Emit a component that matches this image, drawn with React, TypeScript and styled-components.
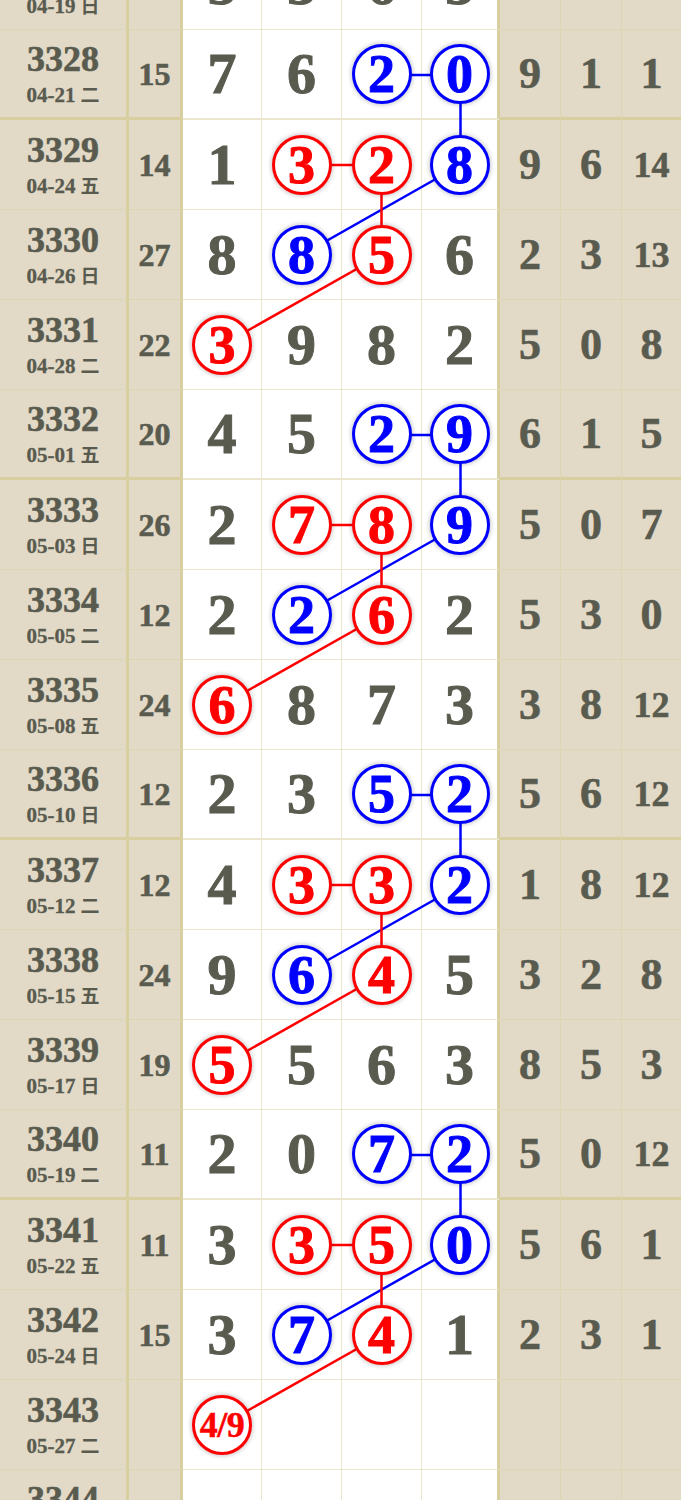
import React from "react";
import styled, { createGlobalStyle, css } from "styled-components";

const GlobalStyle = createGlobalStyle`
  html, body {
    margin: 0;
    padding: 0;
    background: #e2d9c7;
    overflow: hidden;
  }
  body {
    font-family: "Liberation Serif", "Noto Sans CJK SC", serif;
  }
`;

const ROW_H = 90;
const COLS = [129, 54, 79, 80, 80, 78, 61, 61, 59];
const INK = "#595b4f";
const BLUE = "#0000ff";
const RED = "#ff0000";
const RULE = "#d7cf9f";
const RULE_LIGHT = "#ddd6b2";
const RULE_WHITE = "#ebe6cd";

type Tone = "r" | "b" | "n";

interface DrawRow {
  no: number;
  date: string;
  wd: string;
  sum?: number;
  main: string[];
  tail: (number | "")[];
}

const rows: DrawRow[] = [
  { no: 3327, date: "04-19", wd: "日", sum: 17, main: ["5", "3", "6", "3"], tail: [4, 2, 9] },
  { no: 3328, date: "04-21", wd: "二", sum: 15, main: ["7", "6", "b2", "b0"], tail: [9, 1, 1] },
  { no: 3329, date: "04-24", wd: "五", sum: 14, main: ["1", "r3", "r2", "b8"], tail: [9, 6, 14] },
  { no: 3330, date: "04-26", wd: "日", sum: 27, main: ["8", "b8", "r5", "6"], tail: [2, 3, 13] },
  { no: 3331, date: "04-28", wd: "二", sum: 22, main: ["r3", "9", "8", "2"], tail: [5, 0, 8] },
  { no: 3332, date: "05-01", wd: "五", sum: 20, main: ["4", "5", "b2", "b9"], tail: [6, 1, 5] },
  { no: 3333, date: "05-03", wd: "日", sum: 26, main: ["2", "r7", "r8", "b9"], tail: [5, 0, 7] },
  { no: 3334, date: "05-05", wd: "二", sum: 12, main: ["2", "b2", "r6", "2"], tail: [5, 3, 0] },
  { no: 3335, date: "05-08", wd: "五", sum: 24, main: ["r6", "8", "7", "3"], tail: [3, 8, 12] },
  { no: 3336, date: "05-10", wd: "日", sum: 12, main: ["2", "3", "b5", "b2"], tail: [5, 6, 12] },
  { no: 3337, date: "05-12", wd: "二", sum: 12, main: ["4", "r3", "r3", "b2"], tail: [1, 8, 12] },
  { no: 3338, date: "05-15", wd: "五", sum: 24, main: ["9", "b6", "r4", "5"], tail: [3, 2, 8] },
  { no: 3339, date: "05-17", wd: "日", sum: 19, main: ["r5", "5", "6", "3"], tail: [8, 5, 3] },
  { no: 3340, date: "05-19", wd: "二", sum: 11, main: ["2", "0", "b7", "b2"], tail: [5, 0, 12] },
  { no: 3341, date: "05-22", wd: "五", sum: 11, main: ["3", "r3", "r5", "b0"], tail: [5, 6, 1] },
  { no: 3342, date: "05-24", wd: "日", sum: 15, main: ["3", "b7", "r4", "1"], tail: [2, 3, 1] },
  { no: 3343, date: "05-27", wd: "二", main: ["r4/9", "", "", ""], tail: ["", "", ""] },
  { no: 3344, date: "05-29", wd: "五", main: ["", "", "", ""], tail: ["", "", ""] },
];

/* x centre of each of the four main columns */
const colCenter = (i: number) => {
  const start = COLS[0] + COLS[1] + COLS.slice(2, 2 + i).reduce((a, b) => a + b, 0);
  return start + (COLS[2 + i] - 1) / 2;
};
const rowCenter = (i: number) => ROW_H * i + ROW_H / 2;

interface Seg {
  x1: number;
  y1: number;
  x2: number;
  y2: number;
  tone: "r" | "b";
}

const groups = [1, 5, 9, 13];
const segments: Seg[] = groups.flatMap((a) => [
  { x1: colCenter(2), y1: rowCenter(a), x2: colCenter(3), y2: rowCenter(a), tone: "b" as const },
  { x1: colCenter(3), y1: rowCenter(a), x2: colCenter(3), y2: rowCenter(a + 1), tone: "b" as const },
  { x1: colCenter(1), y1: rowCenter(a + 1), x2: colCenter(2), y2: rowCenter(a + 1), tone: "r" as const },
  { x1: colCenter(3), y1: rowCenter(a + 1), x2: colCenter(1), y2: rowCenter(a + 2), tone: "b" as const },
  { x1: colCenter(2), y1: rowCenter(a + 1), x2: colCenter(2), y2: rowCenter(a + 2), tone: "r" as const },
  { x1: colCenter(2), y1: rowCenter(a + 2), x2: colCenter(0), y2: rowCenter(a + 3), tone: "r" as const },
]);

const Page = styled.div`
  width: 681px;
  margin-top: -60px;
`;

const Table = styled.div`
  position: relative;
  width: 681px;
`;

const Row = styled.div`
  display: grid;
  grid-template-columns: ${COLS.map((c) => `${c}px`).join(" ")};
  height: ${ROW_H}px;
`;

const bottomRule = (thick: boolean, white: boolean) =>
  white
    ? css`border-bottom: ${thick ? 2 : 1}px solid ${RULE_WHITE};`
    : css`border-bottom: ${thick ? 3 : 1}px solid ${thick ? RULE : RULE_LIGHT};`;

const BaseCell = styled.div<{ $thick: boolean }>`
  box-sizing: border-box;
  display: flex;
  align-items: center;
  justify-content: center;
  color: ${INK};
  font-weight: 700;
  line-height: 1;
  min-width: 0;
  -webkit-text-stroke: 0.6px currentColor;
`;

const IssueCell = styled(BaseCell)`
  flex-direction: column;
  background: #e2d9c7;
  border-right: 3px solid ${RULE};
  padding-top: 5px;
  ${(p) => bottomRule(p.$thick, false)}
`;

const IssueNo = styled.div`
  font-size: 36px;
  line-height: 36px;
  height: 36px;
`;

const IssueDate = styled.div`
  font-size: 21px;
  line-height: 34px;
  height: 34px;
  white-space: nowrap;
  -webkit-text-stroke: 0.3px currentColor;
`;

const Weekday = styled.span`
  font-family: "Noto Sans CJK SC", sans-serif;
  font-weight: 700;
  font-size: 19px;
  margin-left: 5px;
  -webkit-text-stroke: 0;
`;

const SumCell = styled(BaseCell)`
  background: #e2d9c7;
  border-right: 3px solid ${RULE};
  font-size: 32px;
  ${(p) => bottomRule(p.$thick, false)}
`;

const MainCell = styled(BaseCell)<{ $last: boolean }>`
  background: #ffffff;
  border-right: ${(p) => (p.$last ? `3px solid ${RULE}` : `1px solid ${RULE_WHITE}`)};
  font-size: 58px;
  -webkit-text-stroke: 1px currentColor;
  ${(p) => bottomRule(p.$thick, true)}
`;

const TailCell = styled(BaseCell)<{ $last: boolean; $small: boolean }>`
  background: #e2d9c7;
  border-right: ${(p) => (p.$last ? "none" : `1px solid ${RULE_LIGHT}`)};
  font-size: ${(p) => (p.$small ? 36 : 44)}px;
  ${(p) => bottomRule(p.$thick, false)}
`;

const Ball = styled.div<{ $tone: Tone; $small: boolean }>`
  position: relative;
  z-index: 2;
  box-sizing: border-box;
  width: 60px;
  height: 60px;
  border-radius: 50%;
  border: 3px solid ${(p) => (p.$tone === "b" ? BLUE : RED)};
  background: #ffffff;
  box-shadow: 0 0 4px 1px rgba(0, 0, 0, 0.22);
  color: ${(p) => (p.$tone === "b" ? BLUE : RED)};
  display: flex;
  align-items: center;
  justify-content: center;
  font-size: ${(p) => (p.$small ? 36 : 54)}px;
  font-weight: 700;
  line-height: 1;
  letter-spacing: ${(p) => (p.$small ? "-0.5px" : "0")};
  -webkit-text-stroke: ${(p) => (p.$small ? "0.5px" : "1px")} currentColor;
`;

const Overlay = styled.svg`
  position: absolute;
  left: 0;
  top: 0;
  z-index: 1;
  pointer-events: none;
`;

const isThick = (no: number) => (no - 3328) % 4 === 0;

function MainValue({ value }: { value: string }) {
  if (!value) return null;
  const head = value[0];
  if (head === "r" || head === "b") {
    const text = value.slice(1);
    return (
      <Ball $tone={head} $small={text.length > 1}>
        {text}
      </Ball>
    );
  }
  return <>{value}</>;
}

export default function App() {
  const totalH = rows.length * ROW_H;
  return (
    <>
      <GlobalStyle />
      <Page>
        <Table>
          {rows.map((r) => {
            const thick = isThick(r.no);
            return (
              <Row key={r.no}>
                <IssueCell $thick={thick}>
                  <IssueNo>{r.no}</IssueNo>
                  <IssueDate>
                    {r.date}
                    <Weekday>{r.wd}</Weekday>
                  </IssueDate>
                </IssueCell>
                <SumCell $thick={thick}>{r.sum ?? ""}</SumCell>
                {r.main.map((m, i) => (
                  <MainCell key={i} $thick={thick} $last={i === 3}>
                    <MainValue value={m} />
                  </MainCell>
                ))}
                {r.tail.map((t, i) => (
                  <TailCell
                    key={i}
                    $thick={thick}
                    $last={i === 2}
                    $small={String(t).length > 1}
                  >
                    {t}
                  </TailCell>
                ))}
              </Row>
            );
          })}
          <Overlay width={681} height={totalH} viewBox={`0 0 681 ${totalH}`}>
            {segments.map((s, i) => (
              <line
                key={i}
                x1={s.x1}
                y1={s.y1}
                x2={s.x2}
                y2={s.y2}
                stroke={s.tone === "b" ? BLUE : RED}
                strokeWidth={2.5}
              />
            ))}
          </Overlay>
        </Table>
      </Page>
    </>
  );
}
